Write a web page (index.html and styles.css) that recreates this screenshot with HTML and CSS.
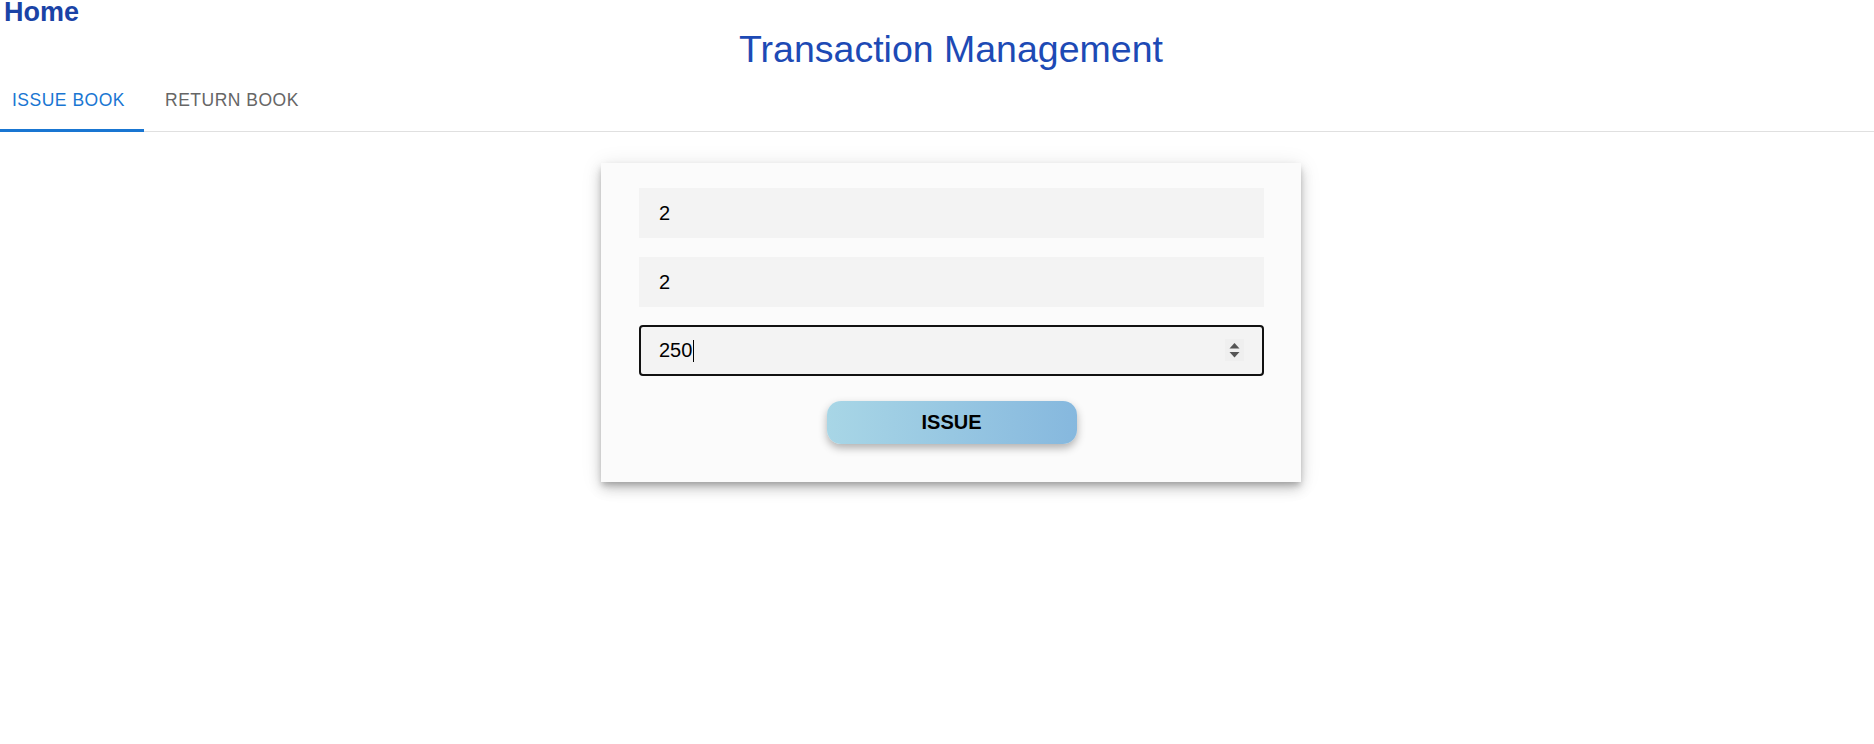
FILE: index.html
```html
<!DOCTYPE html>
<html lang="en">
<head>
<meta charset="utf-8">
<title>Transaction Management</title>
<link rel="stylesheet" href="styles.css">
</head>
<body>
<div class="page">
  <div class="home">Home</div>
  <h1 class="title">Transaction Management</h1>
  <nav class="tabs">
    <div class="tab tab-active">ISSUE BOOK</div>
    <div class="tab tab-second">RETURN BOOK</div>
  </nav>
  <main class="content">
    <form class="card">
      <div class="field">2</div>
      <div class="field">2</div>
      <div class="field field-focused">
        <span class="value">250</span><span class="caret"></span>
        <span class="spin">
          <svg width="11" height="17" viewBox="0 0 11 17">
            <path d="M0.5 6.5 L5.5 1 L10.5 6.5 Z" fill="#555"/>
            <path d="M0.5 10 L5.5 15.5 L10.5 10 Z" fill="#555"/>
          </svg>
        </span>
      </div>
      <div class="actions">
        <div class="issue">ISSUE</div>
      </div>
    </form>
  </main>
</div>
</body>
</html>
```

FILE: styles.css
```css
html, body {
  margin: 0;
  padding: 0;
  background: #ffffff;
}

body {
  font-family: "Liberation Sans", Arial, sans-serif;
  width: 1874px;
  height: 744px;
  overflow: hidden;
}

.home {
  height: 25px;
  line-height: 25px;
  padding-left: 4px;
  font-size: 27px;
  font-weight: bold;
  color: #1a43a6;
}

.title {
  margin: 3px 0 0 0;
  padding-left: 28px;
  text-align: center;
  font-size: 37.5px;
  font-weight: normal;
  line-height: 43px;
  color: #1d4ab5;
}

.tabs {
  display: flex;
  box-sizing: border-box;
  height: 61px;
  border-bottom: 1px solid #e0e0e0;
}

.tab {
  display: flex;
  align-items: center;
  font-size: 17.5px;
  letter-spacing: 0.5px;
  color: #666666;
  box-sizing: border-box;
  padding-bottom: 2px;
}

.tab-active {
  width: 144px;
  padding-left: 12px;
  padding-bottom: 0;
  color: #1976d2;
  border-bottom: 3px solid #1976d2;
  margin-bottom: -1px;
}

.tab-second {
  padding-left: 21px;
}

.content {
  display: flex;
  justify-content: center;
  padding-left: 28px;
  padding-top: 31px;
}

.card {
  width: 700px;
  box-sizing: border-box;
  margin: 0;
  padding: 25px 37px 38px 38px;
  background: #fbfbfb;
  box-shadow: 0 4px 6px -1px rgba(0, 0, 0, 0.22), 0 7px 12px 0 rgba(0, 0, 0, 0.16), 0 2px 20px 0 rgba(0, 0, 0, 0.1);
  display: flex;
  flex-direction: column;
  gap: 19px;
}

.field {
  height: 50px;
  box-sizing: border-box;
  background: #f3f3f3;
  padding-left: 20px;
  display: flex;
  align-items: center;
  font-size: 20px;
  color: #000;
  position: relative;
}

.field-focused {
  border: 2px solid #111111;
  border-radius: 4px;
  padding-left: 18px;
  height: 51px;
  margin-top: -1px;
}

.caret {
  display: inline-block;
  width: 1px;
  height: 22px;
  background: #000;
  margin-left: 1px;
}

.spin {
  position: absolute;
  right: 18px;
  top: 12px;
  width: 19px;
  height: 22px;
  background: #efefef;
  display: flex;
  align-items: center;
  justify-content: center;
}

.actions {
  display: flex;
  justify-content: center;
  margin-top: 6px;
}

.issue {
  width: 250px;
  height: 43px;
  border-radius: 14px;
  background: linear-gradient(90deg, #a8d6e6 0%, #86b8de 100%);
  box-shadow: 0 4px 9px rgba(0, 0, 0, 0.3);
  display: flex;
  align-items: center;
  justify-content: center;
  font-size: 20px;
  font-weight: bold;
  color: #000;
}
```
